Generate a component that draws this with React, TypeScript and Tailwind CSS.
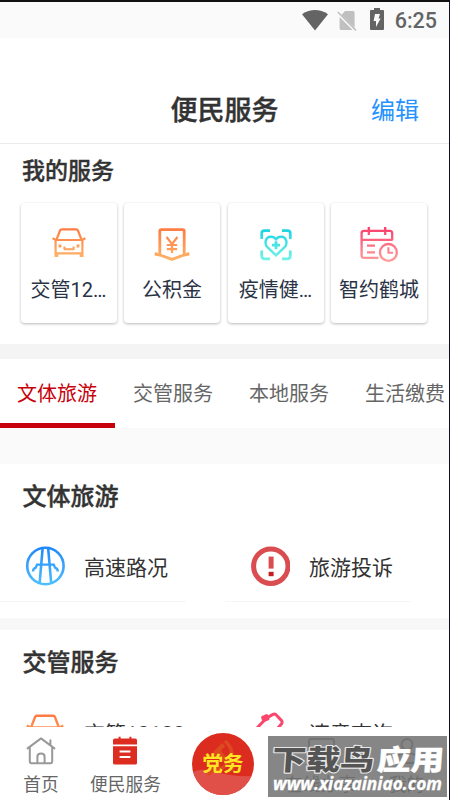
import React from 'react';

interface IconProps {
  className?: string;
}

interface Service {
  label: string;
  icon: React.ReactNode;
}

function CarIcon({ className }: IconProps) {
  return (
    <svg viewBox="0 0 36 36" className={className} fill="none" stroke="url(#car)" strokeWidth="2.2" strokeLinejoin="round">
      <defs>
        <linearGradient id="car" gradientUnits="userSpaceOnUse" x1="0" y1="3" x2="0" y2="31">
          <stop stopColor="#ff7b43" />
          <stop offset="1" stopColor="#ffb266" />
        </linearGradient>
      </defs>
      <path d="M5.4 14 9.2 4.2Q9.6 3.3 10.6 3.3H25.4Q26.4 3.3 26.8 4.2L30.6 14" />
      <path d="M1.6 12.2 5 14H31L34.4 12.2M4.6 14V31M31.4 14V31M4 27.4H32M6.2 28V31M29.8 28V31" />
      <path d="M13.4 20.4V23.2H22.6V20.4" strokeWidth="2" />
      <path d="M7.6 20H10.4M25.6 20H28.4" strokeWidth="2.8" />
    </svg>
  );
}

function FundIcon({ className }: IconProps) {
  return (
    <svg viewBox="0 0 36 36" className={className} fill="none" stroke="url(#fund)" strokeWidth="2.8">
      <defs>
        <linearGradient id="fund" gradientUnits="userSpaceOnUse" x1="0" y1="3" x2="0" y2="34">
          <stop stopColor="#ff7b43" />
          <stop offset="1" stopColor="#ffb266" />
        </linearGradient>
      </defs>
      <path d="M5.8 29V5.2Q5.8 3.6 7.4 3.6H28.6Q30.2 3.6 30.2 5.2V29" />
      <path d="M2 26.4V28.4L6 29 18 33.4 30 29 34 28.4V26.4" strokeWidth="2.8" />
      <path d="M12.6 11 18 18.2 23.4 11M18 18.2V27M12.8 19H23.2M12.8 23.2H23.2" strokeWidth="2.2" />
    </svg>
  );
}

function HealthIcon({ className }: IconProps) {
  return (
    <svg viewBox="0 0 36 36" className={className} fill="none" stroke="url(#health)" strokeWidth="2.7">
      <defs>
        <linearGradient id="health" gradientUnits="userSpaceOnUse" x1="0" y1="3" x2="0" y2="34">
          <stop stopColor="#1cd3e2" />
          <stop offset="1" stopColor="#74f3e9" />
        </linearGradient>
      </defs>
      <path d="M3.7 13V7.5Q3.7 4.7 6.5 4.7H12M24 4.7H29.5Q32.3 4.7 32.3 7.5V13M32.3 24.5V30Q32.3 32.8 29.5 32.8H24M12 32.8H6.5Q3.7 32.8 3.7 30V24.5" />
      <path d="M18 29.4 9.4 21.2C6 17.6 7.4 10.8 12.8 10.8C15 10.8 17 11.8 18 13.2C19 11.8 21 10.8 23.2 10.8C28.6 10.8 30 17.6 26.6 21.2Z" strokeWidth="2.4" />
      <path d="M14 19.2H22M18 15.2V23.2" strokeWidth="2.8" />
    </svg>
  );
}

function CalendarIcon({ className }: IconProps) {
  return (
    <svg viewBox="0 0 40 36" className={className} fill="none" stroke="url(#cal)" strokeWidth="2.3">
      <defs>
        <linearGradient id="cal" gradientUnits="userSpaceOnUse" x1="0" y1="2" x2="0" y2="35">
          <stop stopColor="#fb3f6c" />
          <stop offset="1" stopColor="#ff9d9b" />
        </linearGradient>
      </defs>
      <path d="M33.2 14.5V7.2Q33.2 4.8 30.8 4.8H5Q2.6 4.8 2.6 7.2V29.4Q2.6 31.8 5 31.8H19.5M2.6 13.8H33.2" />
      <path d="M9.8 1V9M26.2 1V9M8 19.6H16M8 26.4H16" />
      <circle cx="29.4" cy="26.4" r="8.4" />
      <path d="M29.4 21.3V26.8H34" strokeWidth="2" />
    </svg>
  );
}

function HighwayIcon({ className }: IconProps) {
  return (
    <svg viewBox="0 0 40 40" className={className} fill="none" stroke="url(#road)" strokeWidth="2.6">
      <defs>
        <linearGradient id="road" gradientUnits="userSpaceOnUse" x1="0" y1="1" x2="0" y2="39">
          <stop stopColor="#1f87fa" />
          <stop offset="1" stopColor="#4fc0ff" />
        </linearGradient>
      </defs>
      <circle cx="20.4" cy="20" r="18.2" />
      <path d="M17.6 2.5 14.6 37.4M23.2 2.5 26.2 37.4" />
      <path d="M8 25.4Q8 22.6 10.8 21.6L12 18.6H28.8L30 21.6Q32.8 22.6 32.8 25.4" strokeWidth="2.3" />
    </svg>
  );
}

function ComplaintIcon({ className }: IconProps) {
  return (
    <svg viewBox="0 0 40 40" className={className} fill="none">
      <circle cx="20.8" cy="20.2" r="17.2" stroke="#d94c50" strokeWidth="5" />
      <rect x="18.6" y="10.6" width="5" height="12" fill="#d94c50" />
      <rect x="18.6" y="25.8" width="5" height="4.4" fill="#c41f22" />
    </svg>
  );
}

function ViolationIcon({ className }: IconProps) {
  return (
    <svg viewBox="0 0 40 40" className={className} fill="none" stroke="#fb476e" strokeWidth="3" strokeLinejoin="round">
      <path d="M1 22.5 16 6.4 23 2.4Q24.6 1.4 26 2.8L31.6 8.6Q32.6 10 31.6 11.8L21 24" />
      <path d="M12.6 5.4 16.6 3.6 18 6.8 13.8 8.6Z" fill="#fb476e" />
    </svg>
  );
}

function HomeIcon({ className }: IconProps) {
  return (
    <svg viewBox="0 0 30 30" className={className} fill="none" stroke="#999" strokeWidth="2" strokeLinejoin="round" strokeLinecap="round">
      <path d="M1.6 12.4 15 2.4 28.4 12.4M24.4 9V4.2M3.8 11V25.6Q3.8 27.2 5.4 27.2H24.6Q26.2 27.2 26.2 25.6V11" />
      <path d="M11.4 27V20.8Q11.4 17.6 15 17.6T18.6 20.8V27" />
    </svg>
  );
}

function ServiceIcon({ className }: IconProps) {
  return (
    <svg viewBox="0 0 30 30" className={className} fill="#dd2c20">
      <path d="M2 8.6V4.2Q2 2.4 3.8 2.4H7.6V.8H9.6V2.4H18.4V.8H20.4V2.4H24.2Q26 2.4 26 4.2V8.6Z" />
      <path d="M2 10.2H26V27Q26 28.6 24.2 28.6H3.8Q2 28.6 2 27Z" />
      <path d="M8.6 15.4H19.4M8.6 21H19.4" stroke="#fff" strokeWidth="2" />
    </svg>
  );
}

function TabletIcon({ className }: IconProps) {
  return (
    <svg viewBox="0 0 30 30" className={className} fill="none" stroke="#888" strokeWidth="2">
      <rect x="3" y="3" width="25" height="24" rx="2" />
      <path d="M9 12H22M9 19H22" />
    </svg>
  );
}

function UserIcon({ className }: IconProps) {
  return (
    <svg viewBox="0 0 30 30" className={className} fill="none" stroke="#888" strokeWidth="2">
      <circle cx="15" cy="8.5" r="5.5" />
      <path d="M3 27C3 20 8 17 15 17S27 20 27 27Z" />
    </svg>
  );
}

const myServices: Service[] = [
  { label: '交管12…', icon: <CarIcon className="h-9 w-9" /> },
  { label: '公积金', icon: <FundIcon className="h-9 w-9" /> },
  { label: '疫情健…', icon: <HealthIcon className="h-9 w-9" /> },
  { label: '智约鹤城', icon: <CalendarIcon className="h-9 w-10" /> },
];

const tabs = ['文体旅游', '交管服务', '本地服务', '生活缴费'];

const groups: { title: string; items: Service[] }[] = [
  {
    title: '文体旅游',
    items: [
      { label: '高速路况', icon: <HighwayIcon className="h-10 w-10" /> },
      { label: '旅游投诉', icon: <ComplaintIcon className="h-10 w-10" /> },
    ],
  },
  {
    title: '交管服务',
    items: [
      { label: '交管12123', icon: <CarIcon className="h-10 w-10" /> },
      { label: '违章查询', icon: <ViolationIcon className="h-10 w-10" /> },
    ],
  },
];

function StatusBar() {
  return (
    <div className="flex h-9 shrink-0 items-center justify-end bg-[#fafafa] pr-3">
      <svg viewBox="0 0 26 21" className="mr-[9px] h-[21px] w-[26px]" fill="#646464">
        <path d="M0 4.2Q13-4.2 26 4.2L13 20.6Z" />
      </svg>
      <svg viewBox="0 0 20 21" className="mr-[13px] h-[21px] w-5">
        <path d="M8 1H16Q17.6 1 17.6 2.6V17.8L4.4 5ZM2.6 7 15.6 20H4Q2.6 20 2.6 18.6Z" fill="#c0c0c0" />
        <path d="M.8 2 19 20.4" stroke="#c0c0c0" strokeWidth="1.5" />
      </svg>
      <svg viewBox="0 0 14 22" className="mr-[11px] mb-[2px] h-[22px] w-[14px]">
        <path d="M4 0H10V2H13Q14 2 14 3V21Q14 22 13 22H1Q0 22 0 21V3Q0 2 1 2H4Z" fill="#646464" />
        <path d="M5 6H10L8.6 10.4H10.6L6 19V13H3.6Z" fill="#fafafa" />
      </svg>
      <span className="pt-px text-[21.5px] leading-9 font-medium text-[#646464]">6:25</span>
    </div>
  );
}

function ServiceGroup({ title, items }: { title: string; items: Service[] }) {
  return (
    <section className="h-[154px] shrink-0 bg-white pt-[17px]">
      <h2 className="pl-[22.5px] text-[24px] leading-8 font-medium text-[#333] [-webkit-text-stroke:0.4px_#333]">{title}</h2>
      <div className="mt-[18px] grid grid-cols-[225px_224px]">
        {items.map((item) => (
          <div key={item.label} className="flex h-[71px] w-[186px] items-center border-b border-[#f6f6f6] pl-[25px]">
            {item.icon}
            <span className="pt-[6px] pl-[19px] text-[21px] whitespace-nowrap text-[#333]">{item.label}</span>
          </div>
        ))}
      </div>
    </section>
  );
}

function NavItem({ label, children, className }: { label: string; children: React.ReactNode; className: string }) {
  return (
    <div className={`flex flex-col items-center pt-[9px] ${className}`}>
      {children}
      <span className="mt-[7px] text-[17.7px] leading-6 whitespace-nowrap text-[#666]">{label}</span>
    </div>
  );
}

function PartyButton() {
  return (
    <div className="flex w-[62px] justify-center pt-[6px]">
      <div className="relative flex h-[62px] w-[62px] items-center justify-center overflow-hidden rounded-full bg-[#dc2c20]">
        <svg viewBox="0 0 62 62" className="absolute inset-0 h-full w-full" fill="none">
          <path d="M0 40Q8 34 24 39T62 43V62H0Z" fill="#e05048" />
          <path d="M33 8Q44 18 37 29Q30 39 18 34M22 36 16 42" stroke="#dd4a20" strokeWidth="3.5" />
          <path d="M21 19 30 10 33 13 29 18 43 35 40 38 26 22 24 24Z" fill="#dd4a20" />
        </svg>
        <span className="relative text-[20.5px] leading-6 font-bold text-[#ffe621]">党务</span>
      </div>
    </div>
  );
}

function SiteBadge() {
  return (
    <div className="absolute right-[2px] bottom-[3px] h-[61px] w-[179px] bg-[rgba(111,111,111,0.84)]">
      <svg viewBox="0 0 179 61" className="h-full w-full">
        <g transform="skewX(-4)" fontWeight="900" fontSize="28" strokeLinejoin="round" paintOrder="stroke">
          <text x="6" y="34.5" textLength="102" lengthAdjust="spacingAndGlyphs" fill="#555" stroke="#e6e6e6" strokeWidth="2.2">下载鸟</text>
          <text x="111" y="34.5" textLength="67" lengthAdjust="spacingAndGlyphs" fill="#fff" stroke="#fff" strokeWidth="0.4">应用</text>
        </g>
        <text x="5" y="54" textLength="169" lengthAdjust="spacingAndGlyphs" fontSize="17.5" fontFamily="'Open Sans', sans-serif" fontStyle="italic" fontWeight="700" fill="#fff" stroke="#fff" strokeWidth=".3">www.xiazainiao.com</text>
      </svg>
    </div>
  );
}

export default function App() {
  return (
    <div
      lang="zh-CN"
      className="relative flex h-[800px] w-[450px] flex-col overflow-hidden border-t-2 border-r border-t-[#111] border-r-[#0d1020] bg-white font-['Roboto','Noto_Sans_CJK_SC',sans-serif]"
    >
      <StatusBar />
      <header className="grid h-[106px] shrink-0 grid-cols-[1fr_auto_1fr] items-center border-b border-[#ebebeb] pt-10">
        <span />
        <h1 className="text-[27px] leading-9 font-medium text-[#333] [-webkit-text-stroke:0.4px_#333]">便民服务</h1>
        <button className="justify-self-end pt-px pr-[30px] text-[24px] leading-9 text-[#2492ff]">编辑</button>
      </header>

      <main className="flex min-h-0 flex-1 flex-col overflow-hidden">
        <section className="h-[200px] shrink-0 pt-3">
          <h2 className="pl-[22px] text-[23px] leading-8 font-medium text-[#333] [-webkit-text-stroke:0.4px_#333]">我的服务</h2>
          <div className="mt-[15px] flex gap-[7.5px] pl-[20.5px]">
            {myServices.map((service) => (
              <div
                key={service.label}
                className="flex h-[120px] w-24 flex-col items-center rounded-[4px] bg-white pt-[23px] shadow-[0_1px_3px_rgba(0,0,0,0.28)]"
              >
                {service.icon}
                <span className="mt-[14px] text-[20px] leading-7 whitespace-nowrap text-[#2a3346]">{service.label}</span>
              </div>
            ))}
          </div>
        </section>

        <div className="h-[15px] shrink-0 bg-[#f4f4f4]" />

        <nav className="flex h-[69px] shrink-0 gap-px overflow-hidden">
          {tabs.map((tab, index) => (
            <button
              key={tab}
              className={`w-[115px] shrink-0 border-b-[5px] pt-[6px] pr-px text-[20px] whitespace-nowrap ${
                index === 0 ? 'border-[#c7000b] text-[#c7000b]' : 'border-transparent text-[#666]'
              }`}
            >
              {tab}
            </button>
          ))}
        </nav>

        <div className="h-9 shrink-0 bg-[#fafafa]" />
        <ServiceGroup {...groups[0]} />
        <div className="h-3 shrink-0 bg-[#f8f8f8]" />
        <ServiceGroup {...groups[1]} />
      </main>

      <footer className="flex h-[73px] shrink-0 bg-white">
        <NavItem label="首页" className="w-[82px]">
          <HomeIcon className="h-[30px] w-[30px]" />
        </NavItem>
        <NavItem label="便民服务" className="w-[87px]">
          <ServiceIcon className="h-[30px] w-[30px]" />
        </NavItem>
        <div className="w-[23px]" />
        <PartyButton />
        <div className="w-[23px]" />
        <NavItem label="在线办事" className="w-[87px]">
          <TabletIcon className="h-[30px] w-[30px]" />
        </NavItem>
        <NavItem label="我的" className="w-[85px]">
          <UserIcon className="h-[30px] w-[30px]" />
        </NavItem>
      </footer>

      <SiteBadge />
    </div>
  );
}
